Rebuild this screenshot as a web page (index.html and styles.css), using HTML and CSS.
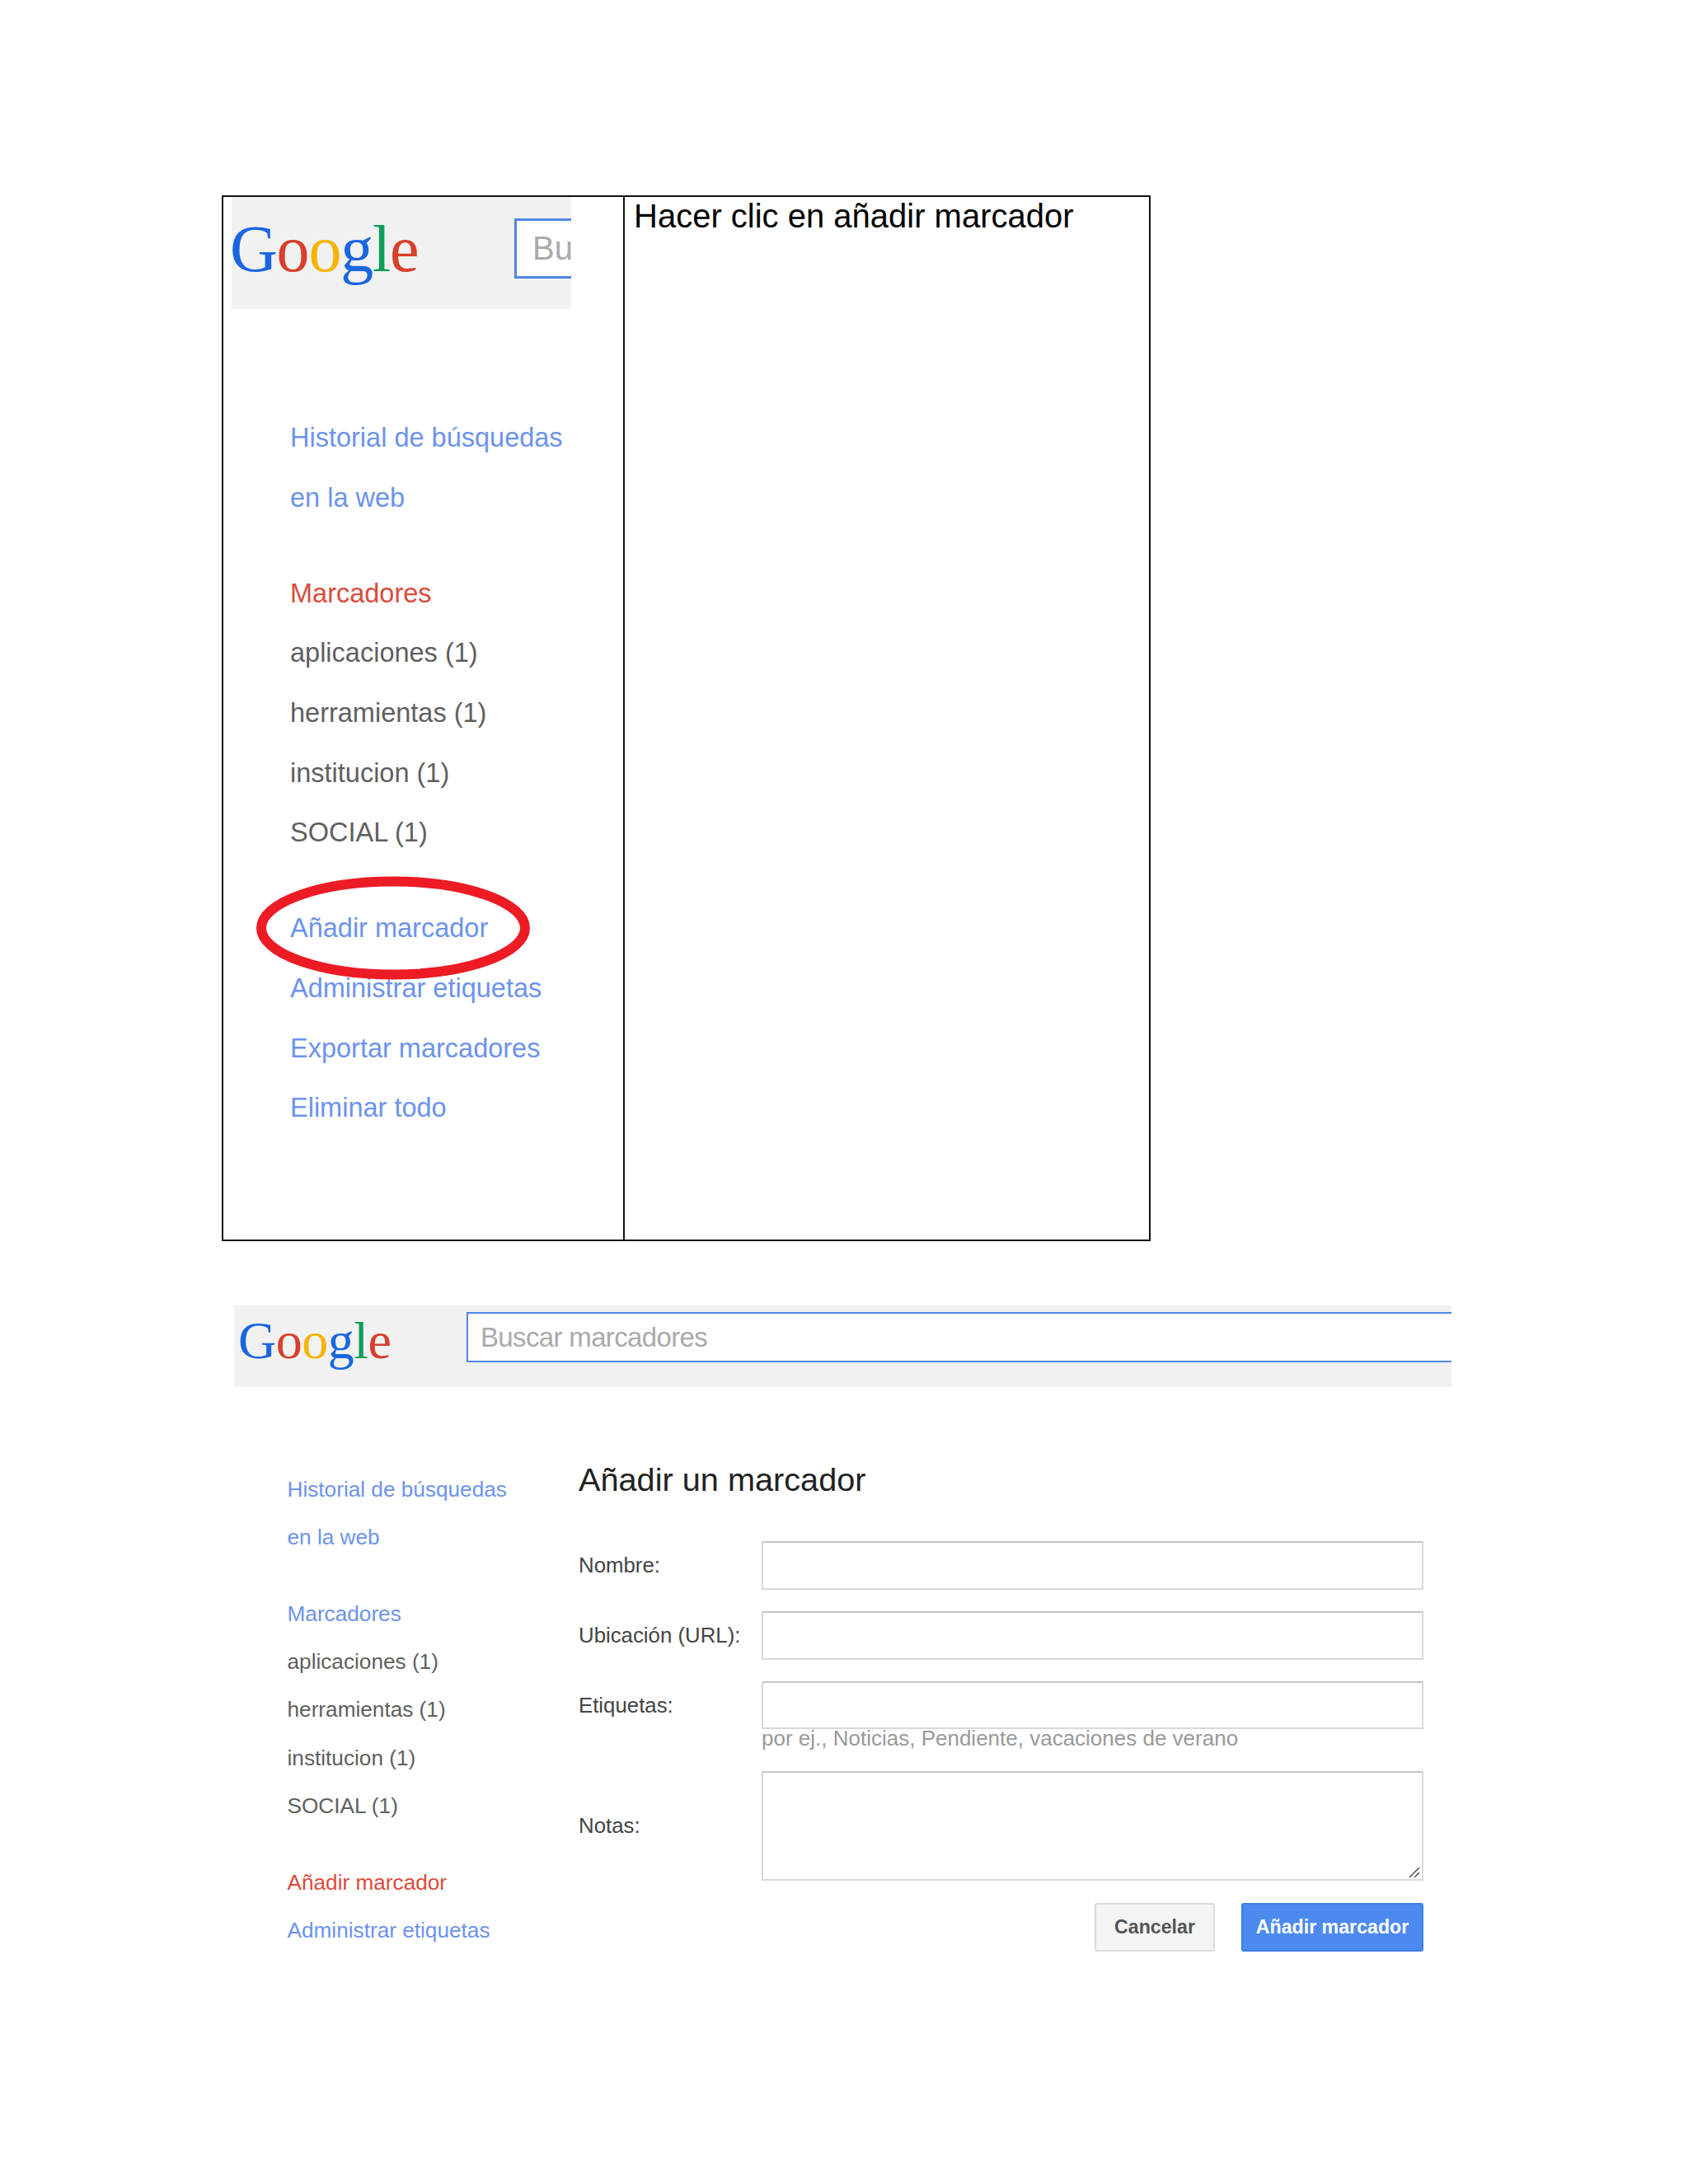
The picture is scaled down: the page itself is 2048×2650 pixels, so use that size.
FILE: index.html
```html
<!DOCTYPE html>
<html lang="es">
<head>
<meta charset="utf-8">
<title>Añadir marcador</title>
<link rel="stylesheet" href="styles.css">
</head>
<body>
<main class="page">
  <section class="step">
    <div class="step-shot">
      <header class="topbar-small">
        <div class="logo logo-large"><span class="g-blue">G</span><span class="g-red">o</span><span class="g-yellow">o</span><span class="g-blue">g</span><span class="g-green">l</span><span class="g-red">e</span></div>
        <div class="search-small">Bu</div>
      </header>
      <nav class="nav-large">
        <div class="nav-group">
          <a class="link">Historial de búsquedas</a>
          <a class="link">en la web</a>
        </div>
        <div class="nav-group">
          <a class="active">Marcadores</a>
          <a class="plain">aplicaciones (1)</a>
          <a class="plain">herramientas (1)</a>
          <a class="plain">institucion (1)</a>
          <a class="plain">SOCIAL (1)</a>
        </div>
        <div class="nav-group">
          <a class="link">Añadir marcador</a>
          <a class="link">Administrar etiquetas</a>
          <a class="link">Exportar marcadores</a>
          <a class="link">Eliminar todo</a>
        </div>
      </nav>
      <svg class="circle" width="332" height="126" viewBox="0 0 332 126" aria-hidden="true">
        <ellipse cx="166" cy="63" rx="160" ry="56.5" fill="none" stroke="#ed1c24" stroke-width="12"/>
      </svg>
    </div>
    <div class="step-text">Hacer clic en añadir marcador</div>
  </section>

  <section class="shot">
    <header class="topbar">
      <div class="logo logo-medium"><span class="g-blue">G</span><span class="g-red">o</span><span class="g-yellow">o</span><span class="g-blue">g</span><span class="g-green">l</span><span class="g-red">e</span></div>
      <div class="search">Buscar marcadores</div>
    </header>
    <div class="shot-body">
      <nav class="nav-small">
        <div class="nav-group">
          <a class="link">Historial de búsquedas</a>
          <a class="link">en la web</a>
        </div>
        <div class="nav-group">
          <a class="link">Marcadores</a>
          <a class="plain">aplicaciones (1)</a>
          <a class="plain">herramientas (1)</a>
          <a class="plain">institucion (1)</a>
          <a class="plain">SOCIAL (1)</a>
        </div>
        <div class="nav-group">
          <a class="active">Añadir marcador</a>
          <a class="link">Administrar etiquetas</a>
        </div>
      </nav>
      <form class="form">
        <h1 class="form-title">Añadir un marcador</h1>
        <div class="row">
          <label class="label">Nombre:</label>
          <input class="field" type="text">
        </div>
        <div class="row">
          <label class="label">Ubicación (URL):</label>
          <input class="field" type="text">
        </div>
        <div class="row row-tags">
          <label class="label">Etiquetas:</label>
          <input class="field" type="text">
        </div>
        <div class="hint">por ej., Noticias, Pendiente, vacaciones de verano</div>
        <div class="row row-notes">
          <label class="label">Notas:</label>
          <div class="notes-wrap">
            <textarea class="field notes"></textarea>
            <svg class="grip" width="14" height="14" viewBox="0 0 14 14" aria-hidden="true">
              <path d="M1 13 L13 1 M7 13 L13 7" fill="none" stroke="#555" stroke-width="1.5"/>
            </svg>
          </div>
        </div>
        <div class="actions">
          <button class="btn btn-cancel" type="button">Cancelar</button>
          <button class="btn btn-primary" type="button">Añadir marcador</button>
        </div>
      </form>
    </div>
  </section>
</main>
</body>
</html>
```
FILE: styles.css
```css
* { box-sizing: border-box; }
html, body { margin: 0; background: #fff; }
body { font-family: "Liberation Sans", Arial, sans-serif; }

.page {
  width: 2048px;
  height: 2650px;
  padding: 237px 0 0 269px;
  overflow: hidden;
}

/* Upper table */
.step {
  display: grid;
  grid-template-columns: 487px 1fr;
  width: 1127px;
  height: 1269px;
  border: 2px solid #111;
}
.step-shot {
  position: relative;
  padding-left: 10px;
  border-right: 2px solid #111;
}
.step-text {
  padding: 0 0 0 11px;
  font-size: 40px;
  line-height: 46px;
  color: #000;
}

.topbar-small {
  display: flex;
  align-items: flex-start;
  width: 412px;
  height: 136px;
  background: #f1f1f1;
}
.logo { font-family: "Liberation Serif", serif; white-space: nowrap; }
.logo-large {
  width: 345px;
  flex: none;
  margin-left: -2px;
  padding-top: 18px;
  font-size: 80px;
  line-height: 90px;
  letter-spacing: -1.2px;
}
.search-small {
  flex: none;
  width: 69px;
  height: 73px;
  margin-top: 26px;
  padding-left: 19px;
  overflow: hidden;
  background: #fff;
  border: 3px solid #4d87e0;
  border-right: 0;
  font-size: 40px;
  line-height: 66px;
  color: #aaa;
}

.g-blue { color: #1a66e0; }
.g-red { color: #d6402c; }
.g-yellow { color: #f5b400; }
.g-green { color: #0f9d58; }

.nav-large {
  padding: 120px 0 0 71px;
  font-size: 32.5px;
  line-height: 72.7px;
}
.nav-large .nav-group { margin-bottom: 43.2px; }
.nav-group a { display: block; white-space: nowrap; }
.link { color: #6d93ec; }
.plain { color: #5f5f5f; }
.active { color: #dc4b3c; }

.circle {
  position: absolute;
  left: 40px;
  top: 824px;
}

/* Lower screenshot */
.shot {
  width: 1477px;
  margin: 78px 0 0 15px;
}
.topbar {
  display: flex;
  align-items: flex-start;
  height: 99px;
  background: #f1f1f1;
}
.logo-medium {
  width: 282px;
  flex: none;
  padding: 7px 0 0 5px;
  font-size: 64px;
  line-height: 72px;
  letter-spacing: -0.5px;
}
.search {
  flex: 1;
  height: 61px;
  margin-top: 8px;
  padding-left: 15px;
  background: #fff;
  border: 2px solid #4d87e0;
  border-right: 0;
  font-size: 33px;
  letter-spacing: -0.65px;
  line-height: 57px;
  color: #aaa;
}

.shot-body { display: flex; }
.nav-small {
  width: 418px;
  flex: none;
  padding: 94.5px 0 0 64.5px;
  font-size: 26.2px;
  line-height: 58.3px;
}
.nav-small .nav-group { margin-bottom: 34.7px; }

.form {
  width: 1025px;
  padding-top: 86.5px;
}
.form-title {
  margin: 0 0 50.5px;
  font-size: 39.7px;
  line-height: 50px;
  font-weight: 400;
  color: #222;
}
.row {
  display: flex;
  align-items: center;
  height: 58.7px;
  margin-bottom: 26.2px;
}
.row-tags { margin-bottom: 0; }
.row-notes { height: 133px; }
.label {
  width: 222px;
  flex: none;
  font-size: 25.8px;
  color: #444;
  white-space: nowrap;
}
.field {
  display: block;
  width: 803px;
  height: 100%;
  margin: 0;
  padding: 0;
  background: #fff;
  border: 2px solid #d9d9d9;
  border-top-color: #c4c4c4;
  border-radius: 0;
  outline: 0;
}
.notes-wrap {
  position: relative;
  width: 803px;
  height: 100%;
}
.notes { resize: none; }
.grip {
  position: absolute;
  right: 4px;
  bottom: 3px;
}
.hint {
  height: 51px;
  padding-left: 222px;
  font-size: 26px;
  line-height: 23px;
  color: #999;
}
.actions {
  display: flex;
  justify-content: flex-end;
  gap: 32px;
}
.btn {
  height: 59px;
  padding: 0;
  font-family: "Liberation Sans", Arial, sans-serif;
  font-size: 23.2px;
  font-weight: 700;
  border-radius: 3px;
}
.btn-cancel {
  width: 146px;
  background: #f4f4f4;
  border: 2px solid #dcdcdc;
  color: #555;
}
.btn-primary {
  width: 221px;
  background: #4d8af0;
  border: 2px solid #3f7fe6;
  color: #fff;
}
```
